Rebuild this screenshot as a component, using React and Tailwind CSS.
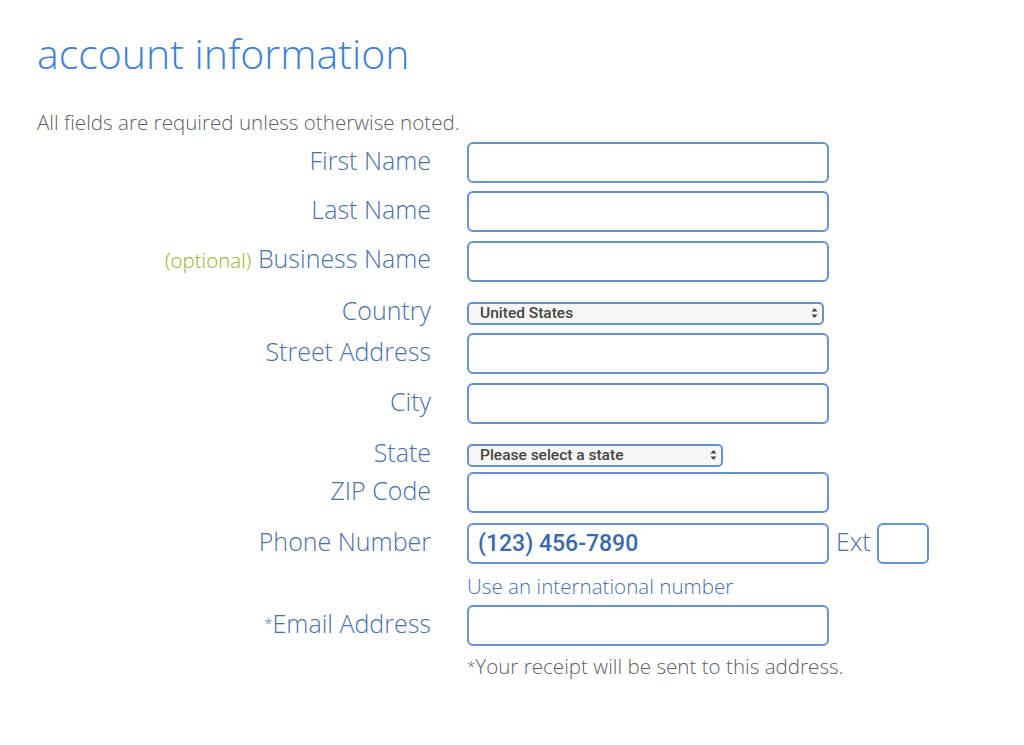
import React from 'react';

const labelCls = "w-[431px] shrink-0 text-right text-[25px] leading-[28px] font-light text-[#4a70ab] mb-[5px]";
const inputCls = "w-[362px] h-[41px] rounded-[6px] border-2 border-[#6593d1] bg-white px-3 outline-none";

const Arrows = () => (
  <svg className="pointer-events-none absolute right-[6px] top-1/2 -translate-y-1/2" width="7" height="11" viewBox="0 0 7 11">
    <path d="M3.5 0.5 L6.5 4 L0.5 4 Z" fill="#444" />
    <path d="M3.5 10.5 L6.5 7 L0.5 7 Z" fill="#444" />
  </svg>
);

const Select = ({ value, width }) => (
  <div className={`relative ${width}`}>
    <select
      defaultValue={value}
      className="w-full h-[23px] appearance-none rounded-[5px] border-2 border-[#6593d1] bg-[#f7f7f7] pl-[11px] text-[15.5px] leading-[19px] font-medium text-[#444] outline-none"
      style={{ fontFamily: 'Roboto, "Liberation Sans", Arial, sans-serif' }}
    >
      <option>{value}</option>
    </select>
    <Arrows />
  </div>
);

const Row = ({ label, children, className = '' }) => (
  <div className={`flex items-center ${className}`}>
    <div className={labelCls}>{label}</div>
    <div className="ml-[36px] flex items-center">{children}</div>
  </div>
);

const Star = () => <span className="text-[15px] align-top">*</span>;

const App = () => {
  return (
    <div className="min-h-[745px] w-[1024px] bg-white" style={{ fontFamily: '"Open Sans", Lato, sans-serif' }}>
      <h1 className="pl-[37px] pt-[28px] text-[41px] leading-[50px] font-light text-[#3d7fd9]">account information</h1>

      <p className="pl-[37px] mt-[31px] text-[20.6px] leading-[26px] font-light text-[#5f5f5f]">All fields are required unless otherwise noted.</p>

      <div className="mt-[7px] flex flex-col">
        <Row label="First Name"><input className={inputCls} /></Row>
        <Row label="Last Name" className="mt-[8px]"><input className={inputCls} /></Row>
        <Row
          label={<><span className="text-[20.5px] text-[#9fac2b]">(optional)</span> Business Name</>}
          className="mt-[9px]"
        >
          <input className={inputCls} />
        </Row>
        <Row label="Country" className="mt-[14px]"><Select value="United States" width="w-[357px]" /></Row>
        <Row label="Street Address" className="mt-[4px]"><input className={inputCls} /></Row>
        <Row label="City" className="mt-[9px]"><input className={inputCls} /></Row>
        <Row label="State" className="mt-[14px]"><Select value="Please select a state" width="w-[256px]" /></Row>
        <Row label="ZIP Code" className="mt-[1px]"><input className={inputCls} /></Row>
        <Row label="Phone Number" className="mt-[10px]">
          <input
            className={`${inputCls} !pl-[9px] text-[23px] text-[#3a6aab] font-medium`}
            style={{ fontFamily: 'Roboto, "Liberation Sans", Arial, sans-serif' }}
            defaultValue="(123) 456-7890"
          />
          <span className="ml-[7px] text-[25px] leading-[28px] font-light text-[#4a70ab] mb-[5px]">Ext</span>
          <input className="ml-[6px] w-[52px] h-[41px] rounded-[6px] border-2 border-[#6593d1] bg-white outline-none" />
        </Row>
        <p className="ml-[467px] mt-[9px] text-[20.6px] leading-[26px] font-light text-[#4a70ab]">Use an international number</p>
        <Row label={<><Star />Email Address</>} className="mt-[6px]"><input className={inputCls} /></Row>
        <p className="ml-[467px] mt-[7px] text-[20.6px] leading-[26px] font-light text-[#5f5f5f]"><Star />Your receipt will be sent to this address.</p>
      </div>
    </div>
  );
};

export default App;
